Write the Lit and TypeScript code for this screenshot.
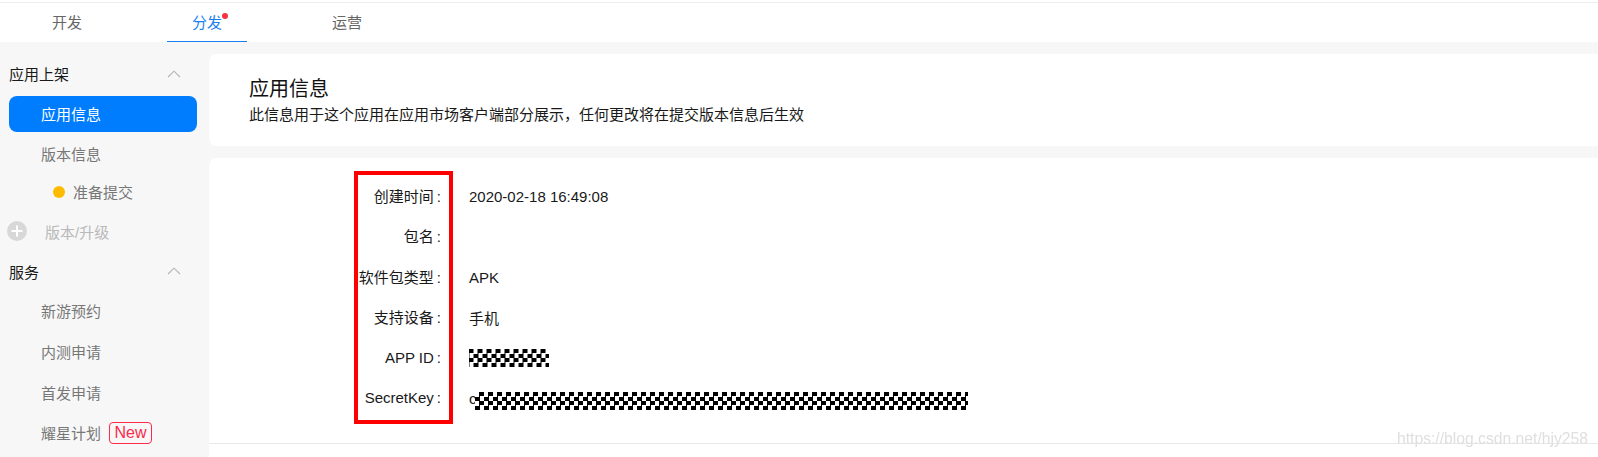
import { LitElement, html, css, svg } from "lit";
import { customElement } from "lit/decorators.js";

const chevron = svg`<svg class="chev" width="14" height="8" viewBox="0 0 14 8"><path d="M1 7L7 1.2L13 7" fill="none" stroke="#b4b4b4" stroke-width="1.1"/></svg>`;

@customElement("app-root")
export class AppRoot extends LitElement {
  static styles = css`
    :host {
      display: block;
      height: 457px;
      overflow: hidden;
      background: #fff;
      position: relative;
      font-family: "Liberation Sans", "Noto Sans CJK SC", sans-serif;
      font-size: 15px;
      color: #191919;
    }
    .topbar {
      height: 40px;
      margin-top: 2px;
      border-top: 1px solid #eeeeee;
      box-sizing: border-box;
      display: flex;
      gap: 60px;
      padding-left: 27px;
    }
    .tab {
      width: 80px;
      box-sizing: border-box;
      padding-bottom: 3px;
      display: flex;
      align-items: center;
      justify-content: center;
      color: #666;
      position: relative;
    }
    .tab.on {
      color: #1a7ff0;
      border-bottom: 1px solid #1a7ff0;
      padding-bottom: 2px;
    }
    .dot {
      position: absolute;
      left: 55px;
      top: 10px;
      width: 6px;
      height: 6px;
      border-radius: 50%;
      background: #f5333f;
    }
    .body {
      display: flex;
      height: 415px;
    }
    .side {
      width: 209px;
      flex: none;
      background: #f7f7f7;
      padding-top: 12px;
      box-sizing: border-box;
    }
    .head {
      height: 40px;
      display: flex;
      align-items: center;
      justify-content: space-between;
      padding: 0 28px 0 9px;
      color: #191919;
    }
    .head span {
      padding-bottom: 2px;
    }
    .head.second span {
      padding-bottom: 0;
    }
    .item {
      height: 36px;
      margin: 5px 12px 0 9px;
      padding: 0 0 2px 32px;
      box-sizing: border-box;
      display: flex;
      align-items: center;
      color: #777;
      border-radius: 8px;
    }
    .item.active {
      margin-top: 2px;
      background: #007dff;
      color: #fff;
    }
    .item.version {
      margin-top: 4px;
    }
    .item.status {
      margin-top: 2px;
      padding-left: 44px;
      gap: 8px;
    }
    .ydot {
      width: 12px;
      height: 12px;
      border-radius: 50%;
      background: #ffbb00;
      margin-top: 2px;
    }
    .add {
      height: 40px;
      margin-top: 1px;
      padding-left: 7px;
      display: flex;
      align-items: center;
      gap: 18px;
      color: #b9b9b9;
    }
    .item.first {
      margin-top: 2px;
    }
    .item.tight {
      margin-top: 4px;
    }
    .badge {
      margin: 2px 0 0 8px;
      height: 22px;
      box-sizing: border-box;
      width: 43px;
      display: flex;
      align-items: center;
      justify-content: center;
      border: 1px solid #fa2a4b;
      border-radius: 4px;
      color: #fa2a4b;
      font-size: 16px;
    }
    .main {
      flex: 1;
      background: #f7f7f7;
      padding-top: 12px;
      min-width: 0;
      display: flex;
      flex-direction: column;
    }
    .card {
      background: #fff;
      border-radius: 8px 0 0 8px;
    }
    .intro {
      height: 92px;
      box-sizing: border-box;
      padding: 21px 0 0 40px;
      margin-bottom: 12px;
      flex: none;
    }
    .intro h1 {
      margin: 0;
      font-size: 20px;
      font-weight: 400;
      line-height: 28px;
      color: #111;
    }
    .intro p {
      margin: 0;
      line-height: 24px;
      color: #191919;
    }
    .info {
      flex: 1;
      border-radius: 8px 0 0 0;
    }
    .rows {
      height: 286px;
      box-sizing: border-box;
      border-bottom: 1px solid #e8e8e8;
      padding-top: 18px;
    }
    .row {
      height: 40.5px;
      display: flex;
      align-items: center;
    }
    .label {
      width: 232px;
      text-align: right;
      flex: none;
      padding-bottom: 2px;
      box-sizing: border-box;
    }
    .colon {
      margin-left: 3px;
    }
    .value {
      margin-left: 28px;
      display: flex;
      align-items: center;
    }
    .redbox {
      position: absolute;
      left: 354px;
      top: 171px;
      width: 99px;
      height: 253px;
      box-sizing: border-box;
      border: 4px solid #ff0000;
    }
    .check {
      height: 18px;
      background: repeating-conic-gradient(#000 0 25%, #fff 0 50%) 0 0 / 9px 9px;
    }
    .c1 {
      width: 80px;
      background-position: 4.5px 0;
    }
    .c2 {
      width: 493px;
      margin-left: -1.5px;
      transform: translateY(2px);
    }
    .mark {
      position: absolute;
      right: 10px;
      top: 429px;
      font-size: 15.7px;
      line-height: 20px;
      color: #dfdfdf;
      filter: blur(0.4px);
    }
  `;

  render() {
    const rows: [string, unknown][] = [
      ["创建时间", "2020-02-18 16:49:08"],
      ["包名", ""],
      ["软件包类型", "APK"],
      ["支持设备", "手机"],
      ["APP ID", html`<div class="check c1"></div>`],
      ["SecretKey", html`c<div class="check c2"></div>`],
    ];
    return html`
      <div class="topbar">
        <div class="tab">开发</div>
        <div class="tab on">分发<span class="dot"></span></div>
        <div class="tab">运营</div>
      </div>
      <div class="body">
        <nav class="side">
          <div class="head"><span>应用上架</span> ${chevron}</div>
          <div class="item active">应用信息</div>
          <div class="item version">版本信息</div>
          <div class="item status"><span class="ydot"></span>准备提交</div>
          <div class="add">
            <svg width="20" height="20" viewBox="0 0 20 20">
              <circle cx="10" cy="10" r="10" fill="#d8d8d8"/>
              <path d="M10 4.5V15.5M4.5 10H15.5" stroke="#fff" stroke-width="2"/>
            </svg>
            <span>版本/升级</span>
          </div>
          <div class="head second"><span>服务</span> ${chevron}</div>
          <div class="item first">新游预约</div>
          <div class="item">内测申请</div>
          <div class="item">首发申请</div>
          <div class="item tight">耀星计划<span class="badge">New</span></div>
        </nav>
        <main class="main">
          <section class="card intro">
            <h1>应用信息</h1>
            <p>此信息用于这个应用在应用市场客户端部分展示，任何更改将在提交版本信息后生效</p>
          </section>
          <section class="card info">
            <div class="rows">
              ${rows.map(
                ([k, v]) => html`<div class="row">
                  <div class="label">${k}<span class="colon">:</span></div>
                  <div class="value">${v}</div>
                </div>`
              )}
            </div>
          </section>
        </main>
      </div>
      <div class="redbox"></div>
      <div class="mark">https://blog.csdn.net/hjy258</div>
    `;
  }
}
